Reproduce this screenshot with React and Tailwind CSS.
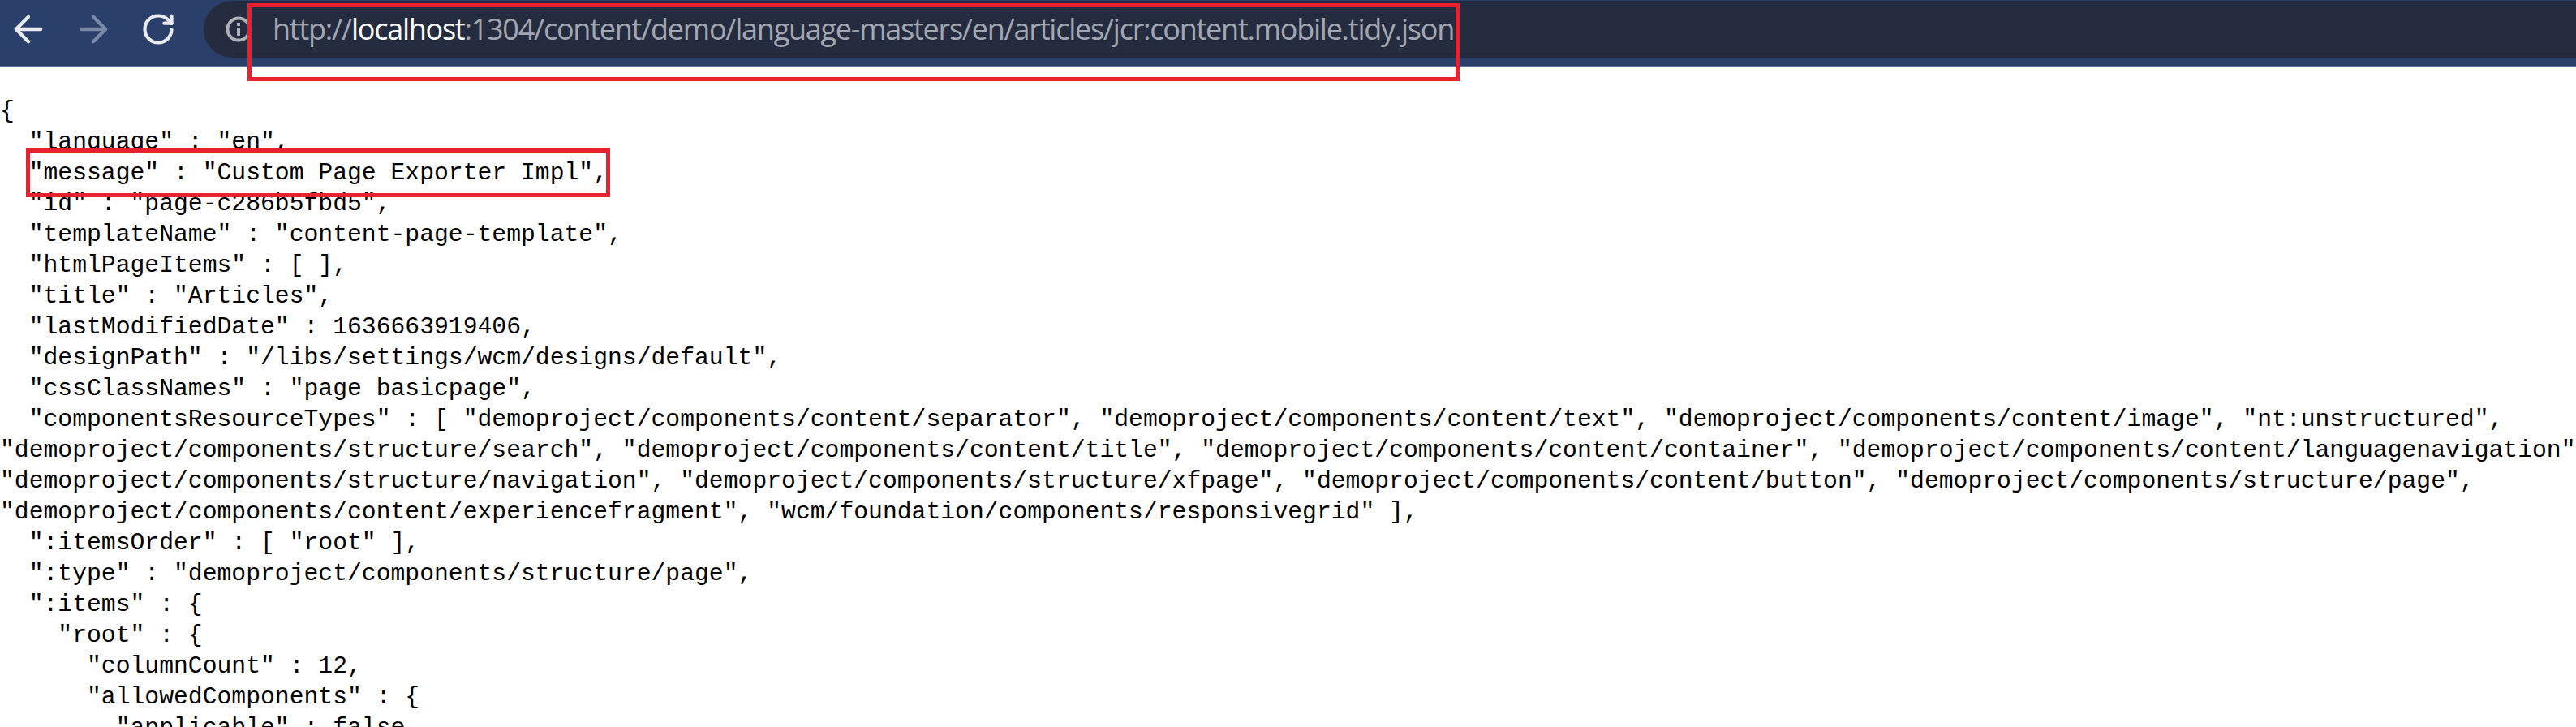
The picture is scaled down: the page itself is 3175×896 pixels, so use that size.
import { ArrowLeft, ArrowRight, RotateCw } from 'lucide-react';

const jsonLines = [
  '{',
  '  "language" : "en",',
  '  "message" : "Custom Page Exporter Impl",',
  '  "id" : "page-c286b5fbd5",',
  '  "templateName" : "content-page-template",',
  '  "htmlPageItems" : [ ],',
  '  "title" : "Articles",',
  '  "lastModifiedDate" : 1636663919406,',
  '  "designPath" : "/libs/settings/wcm/designs/default",',
  '  "cssClassNames" : "page basicpage",',
  '  "componentsResourceTypes" : [ "demoproject/components/content/separator", "demoproject/components/content/text", "demoproject/components/content/image", "nt:unstructured",',
  '"demoproject/components/structure/search", "demoproject/components/content/title", "demoproject/components/content/container", "demoproject/components/content/languagenavigation",',
  '"demoproject/components/structure/navigation", "demoproject/components/structure/xfpage", "demoproject/components/content/button", "demoproject/components/structure/page",',
  '"demoproject/components/content/experiencefragment", "wcm/foundation/components/responsivegrid" ],',
  '  ":itemsOrder" : [ "root" ],',
  '  ":type" : "demoproject/components/structure/page",',
  '  ":items" : {',
  '    "root" : {',
  '      "columnCount" : 12,',
  '      "allowedComponents" : {',
  '        "applicable" : false,',
];

function InfoIcon() {
  return (
    <svg width="32" height="32" viewBox="0 0 32 32" className="shrink-0 text-[#aeb1b8]">
      <circle cx="16" cy="16" r="13.5" fill="none" stroke="currentColor" strokeWidth="4" />
      <rect x="14" y="14" width="4" height="10" fill="currentColor" />
      <rect x="14" y="8" width="4" height="4" fill="currentColor" />
    </svg>
  );
}

export default function App() {
  return (
    <div className="relative h-[896px] w-[3175px] overflow-hidden bg-white">
      <header className="flex h-[83px] items-start border-b-2 border-[#566a92] bg-[#2b3f6b]">
        <nav className="flex h-[71px] w-[251px] items-center pl-[9px] text-[#e8ebf2]">
          <ArrowLeft size={52} strokeWidth={2} />
          <ArrowRight size={52} strokeWidth={2} className="ml-[28px] text-[#7b89a8]" />
          <RotateCw size={44} strokeWidth={2.3} className="ml-[32px]" />
        </nav>
        <div className="mt-px flex h-[70px] flex-1 items-center rounded-l-[35px] bg-[#252c40] pl-[27px]">
          <InfoIcon />
          <span className="ml-[26px] whitespace-pre font-['Open_Sans',sans-serif] text-[36px] leading-none tracking-[-1.25px] text-[#a3a7b1]">
            http://<span className="text-white">localhost</span>:1304/content/demo/language-masters/en/articles/jcr:content.mobile.tidy.json
          </span>
        </div>
      </header>

      <pre className="pt-[35px] font-['Liberation_Mono',monospace] text-[29.73px] leading-[38px] text-black">
        {jsonLines.map((line, i) => (
          <div key={i} className="h-[38px] whitespace-pre">
            {line}
          </div>
        ))}
      </pre>

      {/* red highlight boxes drawn over the screenshot */}
      <div className="absolute left-[305px] top-[4px] h-[96px] w-[1494px] border-[5px] border-[#e8212e]" />
      <div className="absolute left-[32px] top-[183px] h-[60px] w-[720px] border-[5px] border-[#e8212e]" />
    </div>
  );
}
